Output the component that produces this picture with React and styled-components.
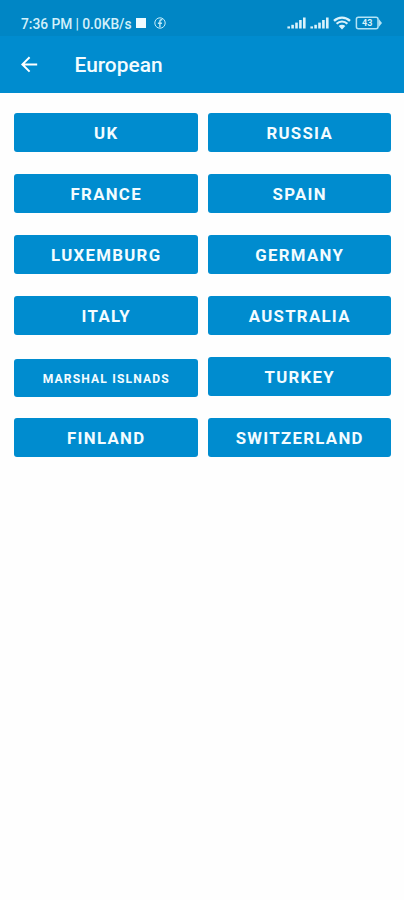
import React from "react";
import styled, { createGlobalStyle } from "styled-components";

const countryRows = [
  [{ name: "UK" }, { name: "RUSSIA" }],
  [{ name: "FRANCE" }, { name: "SPAIN" }],
  [{ name: "LUXEMBURG" }, { name: "GERMANY" }],
  [{ name: "ITALY" }, { name: "AUSTRALIA" }],
  [{ name: "MARSHAL ISLNADS", small: true }, { name: "TURKEY" }],
  [{ name: "FINLAND" }, { name: "SWITZERLAND" }],
];

const SignalIcon = () => (
  <svg width="19" height="12" viewBox="0 0 19 12" fill="#d9f2fb">
    <rect x="0.4" y="9.4" width="2.6" height="2.1" />
    <rect x="4.3" y="7.8" width="2.6" height="3.7" />
    <rect x="8.2" y="5.6" width="2.6" height="5.9" />
    <rect x="12.1" y="3" width="2.6" height="8.5" />
    <rect x="16" y="0.5" width="2.6" height="11" />
  </svg>
);

const WifiIcon = () => (
  <svg width="18" height="14" viewBox="0 0 18 14" fill="none">
    <path d="M1 4.8a11.6 11.6 0 0 1 16 0" stroke="#d9f2fb" strokeWidth="2.4" />
    <path d="M3.6 7.7a7.7 7.7 0 0 1 10.8 0" stroke="#d9f2fb" strokeWidth="2.1" />
    <path d="M5.7 10.1a4.6 4.6 0 0 1 6.6 0L9 13.6z" fill="#d9f2fb" />
  </svg>
);

const FacebookIcon = () => (
  <svg width="12" height="12" viewBox="0 0 12 12" fill="none" stroke="#c4ebf8">
    <circle cx="6" cy="6" r="5.2" strokeWidth="1" />
    <path d="M8.4 2.9c-1.7-.5-2.5.3-2.5 1.7v5.6M3.9 6.3h4" strokeWidth="1.4" />
  </svg>
);

const BatteryIcon = () => (
  <svg width="27" height="14" viewBox="0 0 27 14" fill="none">
    <rect
      x="1.4"
      y="1.2"
      width="21.6"
      height="11.6"
      rx="2"
      stroke="#b4e3f5"
      strokeWidth="1.5"
    />
    <path d="M23.6 2.8 27 7l-3.4 4.2z" fill="#b4e3f5" />
    <BatteryLevel x="12.2" y="10.3" textAnchor="middle">
      43
    </BatteryLevel>
  </svg>
);

const BackIcon = () => (
  <svg width="18" height="18" viewBox="0 0 18 18" fill="none">
    <path
      d="M9.6 1.2 2.4 8.4l7.2 7.2M2.4 8.4h14.8"
      stroke="#fff"
      strokeWidth="2"
    />
  </svg>
);

const App = () => {
  return (
    <>
      <GlobalStyle />
      <Screen>
        <StatusBar>
          <StatusText>7:36 PM | 0.0KB/s</StatusText>
          <StatusSquare />
          <FacebookIcon />
          <StatusRight>
            <SignalIcon />
            <SignalIcon />
            <WifiIcon />
            <BatteryIcon />
          </StatusRight>
        </StatusBar>
        <AppBar>
          <BackButton aria-label="Back">
            <BackIcon />
          </BackButton>
          <Title>European</Title>
        </AppBar>
        <CountryList>
          {countryRows.map((row) => (
            <CountryRow key={row[0].name}>
              {row.map(({ name, small }) => (
                <CountryButton key={name} $small={small}>
                  {name}
                </CountryButton>
              ))}
            </CountryRow>
          ))}
        </CountryList>
      </Screen>
    </>
  );
};

const GlobalStyle = createGlobalStyle`
  * {
    box-sizing: border-box;
  }

  body {
    margin: 0;
    background: #fefefe;
    font-family: Roboto, "Liberation Sans", sans-serif;
  }
`;

const Screen = styled.div`
  width: 100%;
  height: 900px;
  overflow: hidden;
  background: #fefefe;
`;

const StatusBar = styled.div`
  display: flex;
  align-items: center;
  height: 36px;
  padding: 10px 22px 0 21px;
  background: #0086c5;
`;

const StatusText = styled.span`
  width: 111px;
  padding-top: 1px;
  color: #d3f0fa;
  font-size: 13.8px;
  font-weight: 500;
  line-height: 16px;
  word-spacing: -0.2px;
  white-space: nowrap;
`;

const StatusSquare = styled.span`
  width: 10px;
  height: 10px;
  margin: 0 8px 0 4px;
  background: #f0fbff;
`;

const StatusRight = styled.div`
  display: flex;
  align-items: center;
  gap: 4px;
  margin-left: auto;
`;

const BatteryLevel = styled.text`
  fill: #d9f2fb;
  font-size: 9px;
  font-weight: 700;
`;

const AppBar = styled.header`
  display: flex;
  align-items: center;
  height: 57px;
  padding-left: 20px;
  background: #008ccf;
`;

const BackButton = styled.button`
  display: flex;
  padding: 0;
  border: none;
  background: none;
  cursor: pointer;
`;

const Title = styled.h1`
  margin: 0 0 0 36.5px;
  color: #f3fcff;
  font-size: 20.9px;
  font-weight: 500;
  line-height: 24px;
`;

const CountryList = styled.main`
  display: flex;
  flex-direction: column;
  gap: 22.1px;
  padding: 20px 13px 0 14px;
`;

const CountryRow = styled.div`
  display: flex;
  align-items: baseline;
  gap: 10px;
  height: 39px;
`;

const CountryButton = styled.button`
  flex: 1 1 0;
  height: ${({ $small }) => ($small ? "38px" : "39px")};
  padding: ${({ $small }) => ($small ? "2px" : "0")} 0 0 1px;
  border: none;
  border-radius: 3px;
  background: #008ccf;
  color: #f3fcff;
  font-family: inherit;
  font-size: ${({ $small }) => ($small ? "12.1px" : "16.8px")};
  font-weight: 700;
  letter-spacing: ${({ $small }) => ($small ? "1.15px" : "1.3px")};
  white-space: nowrap;
  cursor: pointer;
`;

export default App;
